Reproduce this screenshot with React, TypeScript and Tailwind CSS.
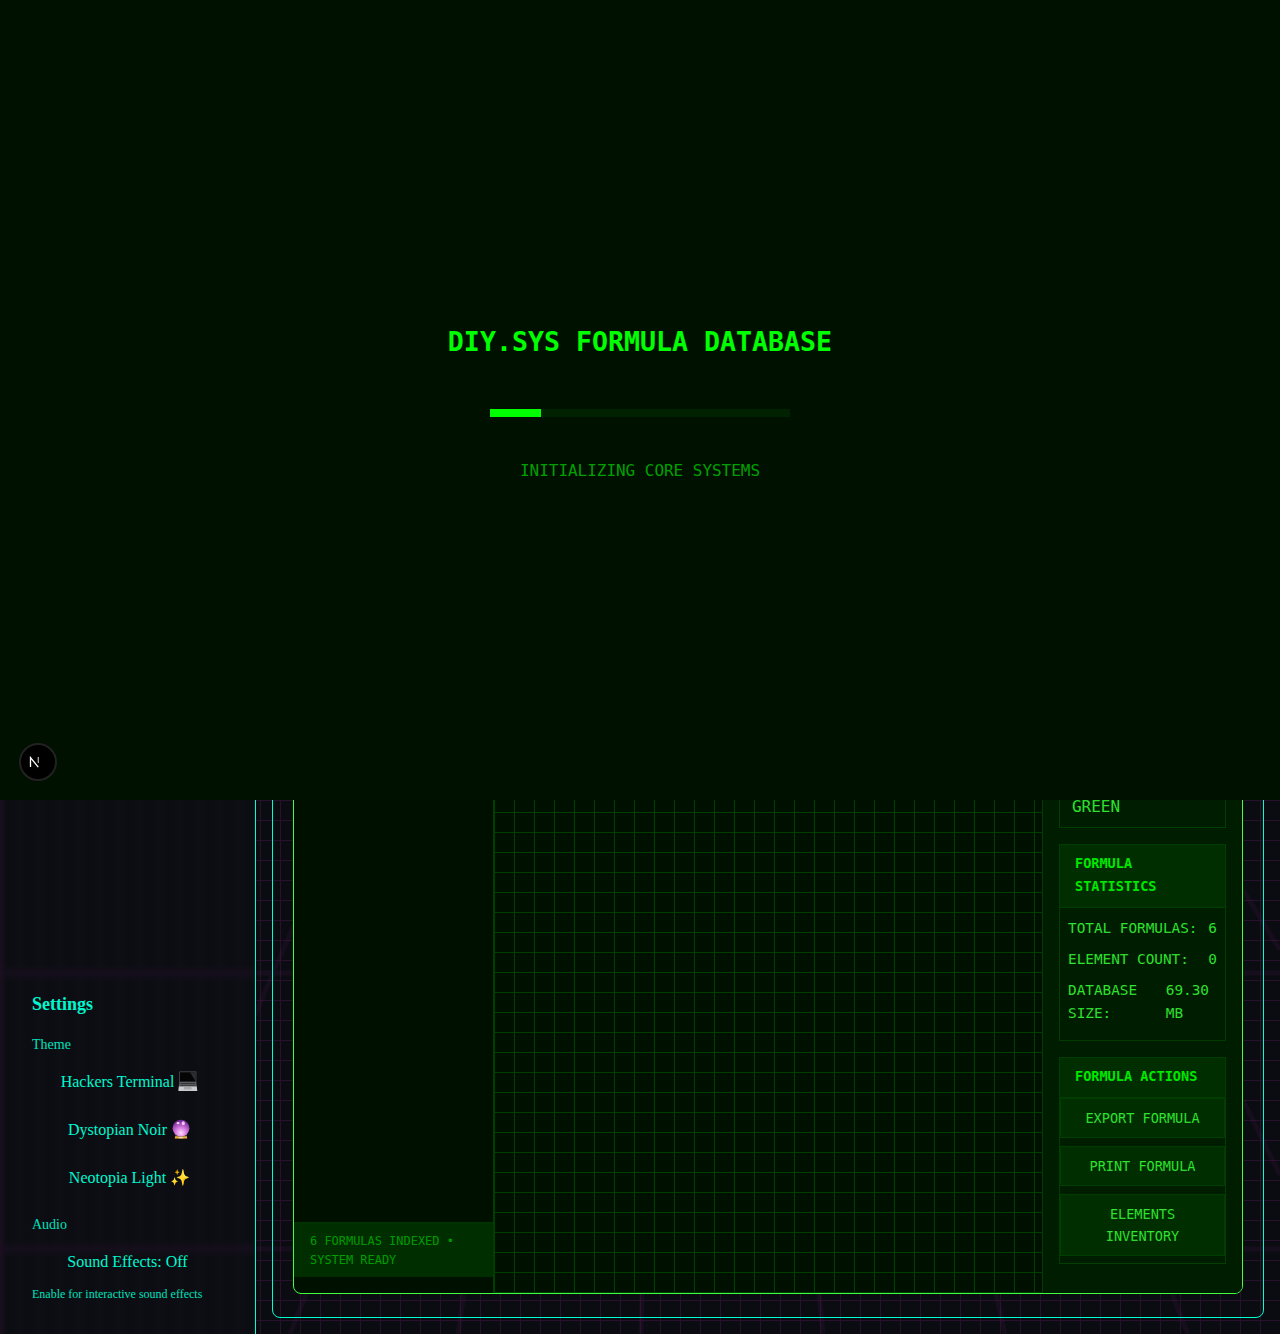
import React from 'react';

const mono = "font-['DejaVu_Sans_Mono',monospace] tracking-[-0.002em]";

function Card({ title, children, height }: { title: React.ReactNode; children: React.ReactNode; height: string }) {
  return (
    <section className={`shrink-0 border border-[#004000] bg-[#001e00] ${height}`}>
      <h3 className="border-b border-[#004000] bg-[#003000] px-[15px] pb-[9px] pt-[7px] font-['DejaVu_Sans_Mono',monospace] text-[13.6px] font-bold leading-[23px] text-[#00f000]">
        {title}
      </h3>
      {children}
    </section>
  );
}

function Stat({ label, value }: { label: React.ReactNode; value: React.ReactNode }) {
  return (
    <div className="mb-2 flex justify-between">
      <span>{label}</span>
      <span>{value}</span>
    </div>
  );
}

function SettingButton({ children }: { children: React.ReactNode }) {
  return <button className="flex h-10 w-full items-center justify-center gap-1 text-base leading-6">{children}</button>;
}

function LaptopIcon() {
  return (
    <svg width="20" height="21" viewBox="0 0 20 21" className="-mt-px">
      <path d="M1.3 0.5H18.3V12H1.3Z" fill="#55585b" />
      <path d="M2 1.2H17.6V10.6H2Z" fill="#050505" />
      <path d="M12 1.2H17.6V10.6Z" fill="#2b2d30" />
      <path d="M1.3 11.5H18.3L18.8 16H0.8Z" fill="#606365" />
      <path d="M2.5 12.5H17.2M2.2 14.3H17.5" stroke="#35373a" strokeWidth="1" />
      <path d="M0.8 15.5H18.8L19.3 20H0.3Z" fill="#c9cbcc" />
      <path d="M6.2 16H13.2L13.8 18.5H5.7Z" fill="#a6a8aa" />
    </svg>
  );
}

function CrystalBallIcon() {
  return (
    <svg width="20" height="21" viewBox="0 0 20 21" className="-mt-px">
      <defs>
        <radialGradient id="orb" cx=".5" cy=".78" r=".75">
          <stop offset="0" stopColor="#ffd9ff" />
          <stop offset=".45" stopColor="#d277dc" />
          <stop offset="1" stopColor="#6f2390" />
        </radialGradient>
      </defs>
      <path d="M4.2 16.5H15.8L16.3 20H3.7Z" fill="#8a5a18" />
      <path d="M4 18.2H7.5M12.5 18.2H16" stroke="#e8b83c" strokeWidth="1.4" />
      <path d="M7.5 18.5H12.5" stroke="#f1d9b0" strokeWidth="1.6" />
      <circle cx="10" cy="9.2" r="8.4" fill="url(#orb)" />
      <ellipse cx="7" cy="4.2" rx="1.5" ry="1.1" fill="#f4d6f7" />
      <ellipse cx="12.3" cy="4.2" rx="1.6" ry="2" fill="#efc4f5" />
    </svg>
  );
}

const bands = [
  [306, -16],
  [464, -6],
  [642, -1],
  [819, 4],
  [996, 9],
  [1172, 16],
];

export default function App() {
  return (
    <div className="relative h-[1334px] w-[1280px] overflow-hidden bg-[#0a0c12] font-['Liberation_Serif',serif] text-[#00f8d0]">
      <div className="absolute inset-0 bg-[linear-gradient(#28112d_1px,transparent_1px),linear-gradient(90deg,#28112d_1px,transparent_1px)] bg-[size:20px_20px]" />
      <svg className="absolute inset-0" width="1280" height="1334">
        <g stroke="#5a1a50" strokeOpacity=".16" strokeWidth="5" fill="none">
          <path d="M294 925L255 1015M1243 890L1280 950M1243 1100L1280 1175M0 973H1280M0 1249H1280" />
          {bands.map(([x, dx]) => (
            <path key={x} d={`M${x} 1294l${dx} 40`} />
          ))}
        </g>
      </svg>

      <div className="relative flex h-full">
        <aside className="flex w-64 shrink-0 flex-col justify-end border-r border-[#00ffd0] bg-[#0c0d13] bg-[linear-gradient(90deg,#1c0f20,transparent_6px),linear-gradient(transparent_965px,#150e1b_973px,transparent_981px),linear-gradient(transparent_1241px,#150e1b_1249px,transparent_1257px),repeating-linear-gradient(90deg,#0e0e14_0px,#0b0d13_10px,#0e0e14_20px)] px-8 pb-8">
          <h2 className="mb-[17px] text-lg font-bold leading-7">Settings</h2>
          <div className="mb-[7px] text-sm leading-5 text-[#00e0bb]">Theme</div>
          <div className="-mr-1 space-y-2">
            <SettingButton>Hackers Terminal <LaptopIcon /></SettingButton>
            <SettingButton>Dystopian Noir <CrystalBallIcon /></SettingButton>
            <SettingButton>Neotopia Light <span>✨</span></SettingButton>
          </div>
          <div className="mb-[7px] mt-[17px] text-sm leading-5 text-[#00e0bb]">Audio</div>
          <SettingButton>Sound Effects: Off</SettingButton>
          <div className="mt-1 text-xs leading-4 text-[#00e0bb]">Enable for interactive sound effects</div>
        </aside>

        <main className="mx-4 mb-4 flex-1 rounded-lg border border-[#00ffd0] px-5 pb-[23px]">
          <div className={`relative flex h-full overflow-hidden rounded-b-lg border border-[#40ff40] bg-[#001100] ${mono}`}>
            <div className="flex w-[199px] shrink-0 flex-col justify-end pb-4">
              <div className="h-[55px] border-t border-[#003800] bg-[#003000] px-4 pt-[9px] text-xs leading-[19px] text-[#00a000]">
                6 FORMULAS INDEXED •<br />SYSTEM READY
              </div>
            </div>
            <div className="w-[550px] border-x border-b border-[#004000] bg-[linear-gradient(#004300_1px,transparent_1px),linear-gradient(90deg,#004300_1px,transparent_1px)] bg-[size:20px_20px] bg-[position:0_10px]" />
            <div className="flex flex-1 flex-col bg-[#001e00] px-4 text-[#30e830]">
              <div className="mb-4 flex h-[826px] shrink-0 flex-col justify-end border border-[#004000] px-3 pb-[7px] text-base leading-[26px]">GREEN</div>
              <Card height="h-[197px]" title={<>FORMULA<br />STATISTICS</>}>
                <div className="px-2 pt-[9px] text-[14.4px] leading-[23px]">
                  <Stat label="TOTAL FORMULAS:" value="6" />
                  <Stat label="ELEMENT COUNT:" value="0" />
                  <Stat label={<>DATABASE<br />SIZE:</>} value={<span className="block pr-2">69.30<br />MB</span>} />
                </div>
              </Card>
              <div className="h-4 shrink-0" />
              <Card height="h-[207px]" title="FORMULA ACTIONS">
                <div className="space-y-2 text-center text-[13.6px] leading-[22px]">
                  <button className="block h-10 w-full border border-[#004000] bg-[#003000]">EXPORT FORMULA</button>
                  <button className="block h-10 w-full border border-[#004000] bg-[#003000]">PRINT FORMULA</button>
                  <button className="block h-[62px] w-full border border-[#004000] bg-[#003000]">ELEMENTS<br />INVENTORY</button>
                </div>
              </Card>
            </div>
            <div className="pointer-events-none absolute inset-0 bg-[repeating-linear-gradient(#00000014_0px,#00000014_1px,transparent_1px,transparent_2px)]" />
          </div>
        </main>
      </div>

      <div className="absolute inset-x-0 top-0 flex h-[800px] flex-col items-center bg-[#001100]">
        <h1 className="mt-[322px] whitespace-nowrap font-['DejaVu_Sans_Mono',monospace] text-[26.6px] font-bold leading-10 text-[#00ff00]">DIY.SYS FORMULA DATABASE</h1>
        <div className="mt-[47px] h-2 w-[300px] bg-[#002200]">
          <div className="h-full w-[51.3px] bg-[#00ff00]" />
        </div>
        <p className={`mt-[41px] text-base leading-[26px] text-[#00a000] ${mono}`}>INITIALIZING CORE SYSTEMS</p>
      </div>

      <div className="absolute left-[19px] top-[743px] flex size-[38px] items-center rounded-full border-2 border-[#222] bg-black pl-2">
        <svg width="12" height="12" viewBox="0 0 12 12" fill="none" stroke="white" strokeWidth="1.3">
          <path d="M1.5 11V1.6L9.3 11.2" />
          <path d="M9.3 1V7" strokeOpacity=".65" />
        </svg>
      </div>
    </div>
  );
}
